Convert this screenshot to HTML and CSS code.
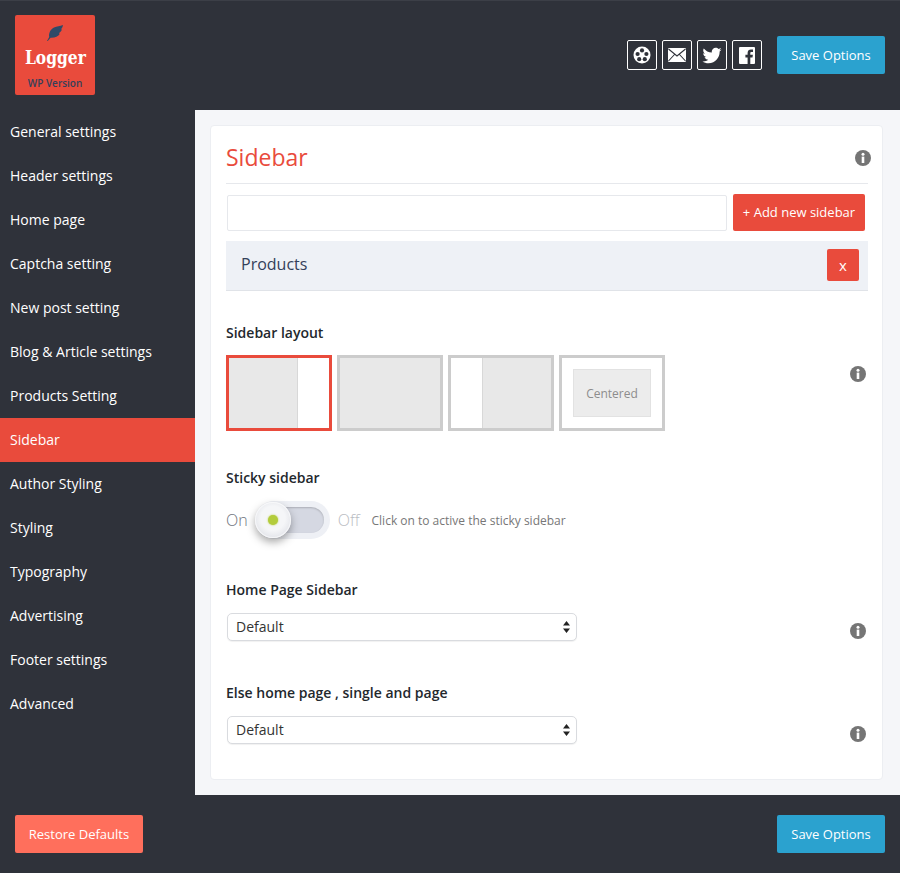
FILE: index.html
```html
<!DOCTYPE html>
<html lang="en">
<head>
  <meta charset="UTF-8">
  <title>Logger Options</title>
  <link rel="stylesheet" href="styles.css">
</head>
<body>

  <header class="topbar">
    <div class="logo">
      <svg class="logo-feather" viewBox="0 0 16 16" width="16" height="16"><path d="M0 16 L2.2 12 C1.4 8.5 3.5 4 7 2.4 C9.8 1.1 13 1.2 16 0 C15.8 1.8 15 3.2 13.9 4.3 L15 4.6 C14.2 6.4 13 7.6 11.8 8.4 L12.9 8.8 C11.2 11.3 8 13 3.6 12.8 L0.8 16 Z" fill="#2f4a68"/></svg>
      <div class="logo-name">Logger</div>
      <div class="logo-sub">WP Version</div>
    </div>
    <div class="top-actions">
      <a class="icon-box">
        <svg viewBox="0 0 18 18" width="18" height="18"><circle cx="9" cy="9" r="8.5" fill="#fff"/><g fill="#2f323a"><circle cx="9" cy="4.4" r="2.1"/><circle cx="4.6" cy="8" r="2.1"/><circle cx="13.4" cy="8" r="2.1"/><circle cx="6.2" cy="13.2" r="2.1"/><circle cx="11.8" cy="13.2" r="2.1"/></g></svg>
      </a>
      <a class="icon-box">
        <svg viewBox="0 0 18 14" width="18" height="14"><rect width="18" height="14" rx="1" fill="#fff"/><path d="M0.5 1 L9 8 L17.5 1 M0.5 13 L6.5 6.5 M17.5 13 L11.5 6.5" fill="none" stroke="#2f323a" stroke-width="1.1"/></svg>
      </a>
      <a class="icon-box">
        <svg viewBox="0 0 24 24" width="22" height="22"><path fill="#fff" d="M22.46,6C21.69,6.35 20.86,6.58 20,6.69C20.88,6.16 21.56,5.32 21.88,4.31C21.05,4.81 20.13,5.16 19.16,5.36C18.37,4.5 17.26,4 16,4C13.65,4 11.73,5.92 11.73,8.29C11.73,8.63 11.77,8.96 11.84,9.27C8.28,9.09 5.11,7.38 3,4.79C2.63,5.42 2.42,6.16 2.42,6.94C2.42,8.43 3.17,9.75 4.33,10.5C3.62,10.5 2.96,10.3 2.38,10C2.38,10 2.38,10 2.38,10.03C2.38,12.11 3.86,13.85 5.82,14.24C5.46,14.34 5.08,14.39 4.69,14.39C4.42,14.39 4.15,14.36 3.89,14.31C4.43,16 6,17.26 7.89,17.29C6.43,18.45 4.57,19.13 2.56,19.13C2.22,19.13 1.88,19.11 1.54,19.07C3.44,20.29 5.7,21 8.12,21C16,21 20.33,14.46 20.33,8.79C20.33,8.6 20.33,8.42 20.32,8.23C21.16,7.63 21.88,6.87 22.46,6Z"/></svg>
      </a>
      <a class="icon-box">
        <svg viewBox="0 0 16 17" width="16" height="17"><path fill="#fff" d="M1 0 H15 A1 1 0 0 1 16 1 V16 A1 1 0 0 1 15 17 H11.3 V10.4 H13.5 L13.9 7.8 H11.3 V6.2 C11.3 5.4 11.6 4.9 12.6 4.9 H14 V2.6 C13.7 2.6 12.9 2.5 12 2.5 C10 2.5 8.6 3.7 8.6 5.9 V7.8 H6.4 V10.4 H8.6 V17 H1 A1 1 0 0 1 0 16 V1 A1 1 0 0 1 1 0 Z"/></svg>
      </a>
      <button class="btn btn-blue top-save">Save Options</button>
    </div>
  </header>

  <div class="middle">
    <nav class="sidenav">
      <a>General settings</a>
      <a>Header settings</a>
      <a>Home page</a>
      <a>Captcha setting</a>
      <a>New post setting</a>
      <a>Blog &amp; Article settings</a>
      <a>Products Setting</a>
      <a class="active">Sidebar</a>
      <a>Author Styling</a>
      <a>Styling</a>
      <a>Typography</a>
      <a>Advertising</a>
      <a>Footer settings</a>
      <a>Advanced</a>
    </nav>

    <main class="content">
      <section class="card">
        <div class="card-head">
          <h1>Sidebar</h1>
          <svg class="info head-info" viewBox="0 0 16 16" width="16" height="16"><use href="#info"/></svg>
        </div>

        <div class="add-row">
          <input type="text" class="add-input">
          <button class="btn btn-red add-btn">+ Add new sidebar</button>
        </div>

        <div class="list-row">
          <span>Products</span>
          <button class="btn btn-red del-btn">x</button>
        </div>

        <div class="field layout-field">
          <div class="field-main">
            <h2>Sidebar layout</h2>
            <div class="layouts">
              <div class="layout selected"><div class="fill"></div><div class="side side-r"></div></div>
              <div class="layout"><div class="fill"></div></div>
              <div class="layout"><div class="side side-l"></div><div class="fill"></div></div>
              <div class="layout centered"><div class="center-box">Centered</div></div>
            </div>
          </div>
          <svg class="info" viewBox="0 0 16 16" width="16" height="16"><use href="#info"/></svg>
        </div>

        <div class="sticky-field">
          <h2>Sticky sidebar</h2>
          <div class="toggle-row">
            <span class="on">On</span>
            <div class="toggle"><div class="track"></div><div class="knob"><span class="dot"></span></div></div>
            <span class="off">Off</span>
            <span class="hint">Click on to active the sticky sidebar</span>
          </div>
        </div>

        <div class="field select-field">
          <div class="field-main">
            <h2>Home Page Sidebar</h2>
            <div class="select-wrap">
              <select><option>Default</option></select>
              <svg class="arrows" viewBox="0 0 7 12" width="7" height="12"><path d="M3.5 0 L7 4.5 H0 Z M3.5 12 L0 7.5 H7 Z" fill="#222"/></svg>
            </div>
          </div>
          <svg class="info" viewBox="0 0 16 16" width="16" height="16"><use href="#info"/></svg>
        </div>

        <div class="field select-field last">
          <div class="field-main">
            <h2>Else home page , single and page</h2>
            <div class="select-wrap">
              <select><option>Default</option></select>
              <svg class="arrows" viewBox="0 0 7 12" width="7" height="12"><path d="M3.5 0 L7 4.5 H0 Z M3.5 12 L0 7.5 H7 Z" fill="#222"/></svg>
            </div>
          </div>
          <svg class="info" viewBox="0 0 16 16" width="16" height="16"><use href="#info"/></svg>
        </div>
      </section>
    </main>
  </div>

  <footer class="bottombar">
    <button class="btn btn-coral">Restore Defaults</button>
    <button class="btn btn-blue">Save Options</button>
  </footer>

  <svg class="defs" width="0" height="0">
    <symbol id="info" viewBox="0 0 16 16">
      <circle cx="8" cy="8" r="8" fill="#757575"/>
      <circle cx="8" cy="4.2" r="1.5" fill="#fff"/>
      <rect x="6.7" y="6.6" width="2.6" height="6.4" fill="#fff"/>
    </symbol>
  </svg>

</body>
</html>
```

FILE: styles.css
```css
* {
  box-sizing: border-box;
}
body {
  margin: 0;
  width: 900px;
  height: 873px;
  background: #2f323a;
  font-family: 'Open Sans', sans-serif;
  color: #23282d;
  overflow: hidden;
}
.defs {
  position: absolute;
}

.topbar {
  height: 110px;
  padding: 15px 15px 0;
  display: flex;
  justify-content: space-between;
  align-items: flex-start;
  border-top: 1px solid #3c3f47;
}
.logo {
  width: 80px;
  height: 80px;
  margin-top: -1px;
  background: #e94b3c;
  border-radius: 2px;
  display: flex;
  flex-direction: column;
  align-items: center;
  color: #fff;
}
.logo-feather {
  margin-top: 10px;
}
.logo-name {
  font-family: 'DejaVu Serif', serif;
  font-weight: bold;
  font-size: 18px;
  line-height: 24px;
  margin-top: 5px;
  transform: scaleX(0.86);
}
.logo-sub {
  font-size: 10px;
  font-weight: 600;
  line-height: 12px;
  margin-top: 7px;
  color: #34405a;
}
.top-actions {
  display: flex;
  align-items: center;
  gap: 5px;
  margin-top: 20px;
}
.icon-box {
  width: 30px;
  height: 30px;
  border: 1px solid #fff;
  border-radius: 2px;
  display: flex;
  align-items: center;
  justify-content: center;
}
.top-save {
  margin-left: 10px;
}

.btn {
  border: none;
  border-radius: 2px;
  color: #fff;
  font-family: 'Open Sans', sans-serif;
  font-size: 13px;
  font-weight: 500;
  cursor: pointer;
}
.btn-blue {
  width: 108px;
  height: 38px;
  background: #2ba2cf;
}
.btn-red {
  background: #e94b3c;
}
.btn-coral {
  width: 128px;
  height: 38px;
  background: #ff6f5c;
}

.middle {
  display: flex;
  height: 685px;
}
.sidenav {
  width: 195px;
  flex-shrink: 0;
}
.sidenav a {
  display: block;
  height: 44px;
  line-height: 44px;
  padding-left: 10px;
  font-size: 14px;
  font-weight: 500;
  color: #fff;
}
.sidenav a.active {
  background: #e94b3c;
}

.content {
  flex: 1;
  background: #f5f6f9;
  padding: 15px 17px 15px 15px;
}
.card {
  height: 655px;
  background: #fff;
  border: 1px solid #eceef2;
  border-radius: 4px;
  padding: 0 14px 0 15px;
}
.card-head {
  height: 58px;
  display: flex;
  justify-content: space-between;
  align-items: center;
  border-bottom: 1px solid #e6e8ec;
  padding-top: 4px;
}
.card-head h1 {
  margin: 0;
  font-size: 23px;
  font-weight: 400;
  color: #e94b3c;
}
.head-info {
  margin-top: 3px;
  margin-right: -3px;
}

.add-row {
  display: flex;
  gap: 6px;
  margin-top: 10px;
  padding-left: 1px;
  align-items: flex-start;
}
.add-input {
  width: 500px;
  height: 36px;
  margin-top: 1px;
  border: 1px solid #e6e8ec;
  border-radius: 2px;
  background: #fff;
}
.add-btn {
  width: 132px;
  height: 37px;
  padding-bottom: 3px;
}
.list-row {
  height: 50px;
  margin-top: 10px;
  background: #eef1f6;
  border-bottom: 1px solid #e0e3e8;
  display: flex;
  justify-content: space-between;
  align-items: center;
  padding: 0 9px 2px 15px;
  font-size: 16px;
  color: #34405a;
}
.list-row span {
  margin-top: -2px;
}
.del-btn {
  width: 32px;
  height: 32px;
  font-size: 15px;
}

.field {
  display: flex;
  justify-content: space-between;
  align-items: flex-end;
}
.field h2, .sticky-field h2 {
  margin: 0;
  font-size: 14px;
  font-weight: 600;
  line-height: 20px;
  color: #23282d;
}
.layout-field {
  margin-top: 32px;
}
.layout-field .info {
  margin-bottom: 49px;
  margin-right: 2px;
}
.layouts {
  display: flex;
  gap: 5px;
  margin-top: 12px;
}
.layout {
  width: 106px;
  height: 76px;
  border: 3px solid #cccccc;
  background: #fff;
  display: flex;
}
.layout.selected {
  border-color: #e94b3c;
}
.fill {
  flex: 1;
  background: #e8e8e8;
}
.side {
  width: 32px;
  background: #fff;
}
.side-r {
  border-left: 1px solid #d8d8d8;
}
.side-l {
  border-right: 1px solid #d8d8d8;
}
.centered {
  align-items: center;
  justify-content: center;
}
.center-box {
  width: 78px;
  height: 48px;
  background: #ececec;
  border: 1px solid #e2e2e2;
  color: #8d8d8d;
  font-size: 12px;
  display: flex;
  align-items: center;
  justify-content: center;
}

.sticky-field {
  margin-top: 37px;
}
.toggle-row {
  display: flex;
  align-items: center;
  margin-top: 13px;
  height: 38px;
}
.on, .off {
  font-size: 16px;
  font-weight: 300;
  line-height: 20px;
}
.on {
  color: #6f747e;
}
.off {
  color: #b9bcc2;
  margin-left: 8px;
}
.toggle {
  position: relative;
  width: 75px;
  height: 38px;
  margin-left: 7px;
  border-radius: 19px;
  background: #eef0f5;
}
.track {
  position: absolute;
  left: 3px;
  top: 6px;
  width: 66px;
  height: 26px;
  border-radius: 13px;
  background: #d5d8e2;
  box-shadow: inset 0 1px 2px rgba(0, 0, 0, 0.2);
}
.knob {
  position: absolute;
  left: 0;
  top: 1px;
  width: 36px;
  height: 36px;
  border-radius: 50%;
  background: radial-gradient(circle at 50% 45%, #f5f6f8 45%, #d4d6de 100%);
  box-shadow: 0 4px 8px rgba(0, 0, 0, 0.35), inset 0 0 0 1px rgba(255, 255, 255, 0.6);
  display: flex;
  align-items: center;
  justify-content: center;
}
.dot {
  width: 10px;
  height: 10px;
  border-radius: 50%;
  background: #b3cc3c;
  box-shadow: 0 0 2px #b3cc3c;
}
.hint {
  margin-left: 12px;
  font-size: 12px;
  color: #777;
}

.select-field {
  margin-top: 41px;
}
.select-field .info {
  margin-bottom: 2px;
  margin-right: 2px;
}
.select-field.last {
  margin-top: 42px;
}
.select-wrap {
  position: relative;
  width: 350px;
  margin-top: 13px;
  margin-left: 1px;
}
.select-wrap select {
  width: 100%;
  height: 28px;
  appearance: none;
  border: 1px solid #d9dbdf;
  border-radius: 5px;
  background: #fff;
  padding: 0 0 2px 8px;
  font-family: 'Open Sans', sans-serif;
  font-size: 14px;
  color: #333;
  box-shadow: 0 1px 1px rgba(0, 0, 0, 0.06);
}
.arrows {
  position: absolute;
  right: 7px;
  top: 8px;
}

.bottombar {
  height: 78px;
  padding: 20px 15px 0;
  display: flex;
  justify-content: space-between;
  align-items: flex-start;
}
```
